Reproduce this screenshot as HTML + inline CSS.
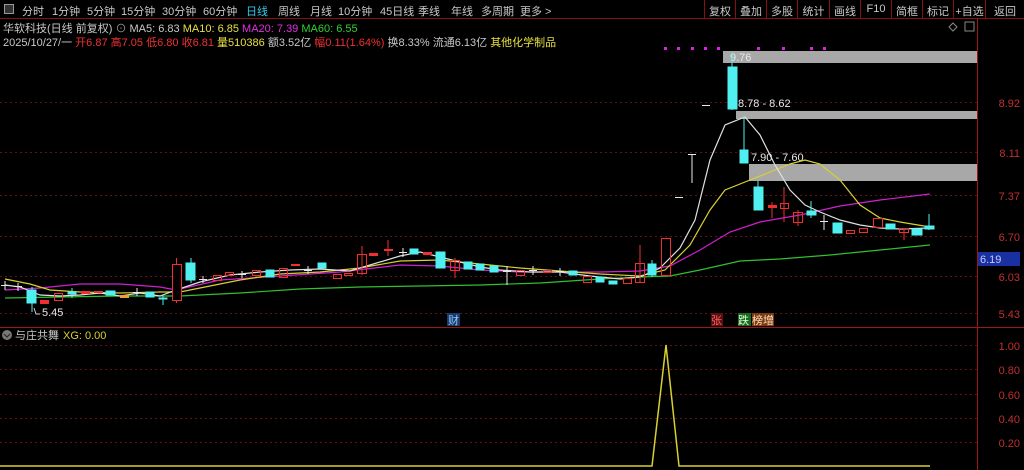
<!DOCTYPE html>
<html><head><meta charset="utf-8"><style>
*{margin:0;padding:0;box-sizing:border-box}
body{width:1024px;height:470px;background:#000;overflow:hidden;position:relative;font-family:"Liberation Sans","Noto Sans CJK SC",sans-serif;font-size:11px;color:#c8c8c8}
.t{position:absolute;white-space:nowrap}
#tb{position:absolute;left:0;top:0;width:1024px;height:19px;border-bottom:1px solid #8a1010}
#tb span{position:absolute;top:3px;font-size:11px;color:#c8c8c8}
.btn{position:absolute;top:0;height:19px;border-left:1px solid #8a1010;color:#c8c8c8;font-size:11px;padding-top:3px;text-align:center}
</style></head><body>
<div id="tb">
<div style="position:absolute;left:4px;top:4px;width:10px;height:10px;border:1px solid #999;background:#333"></div>
<span style="left:22px">分时</span><span style="left:52px">1分钟</span><span style="left:87px">5分钟</span><span style="left:121px">15分钟</span><span style="left:162px">30分钟</span><span style="left:203px">60分钟</span><span style="left:246px;color:#3cc8e8">日线</span><span style="left:278px">周线</span><span style="left:310px">月线</span><span style="left:338px">10分钟</span><span style="left:380px">45日线</span><span style="left:418px">季线</span><span style="left:451px">年线</span><span style="left:481px">多周期</span><span style="left:520px">更多 &gt;</span>
<div class="btn" style="left:704px;width:31px">复权</div><div class="btn" style="left:735px;width:31px">叠加</div><div class="btn" style="left:766px;width:31px">多股</div><div class="btn" style="left:797px;width:32px">统计</div><div class="btn" style="left:829px;width:31px">画线</div><div class="btn" style="left:860px;width:31px">F10</div><div class="btn" style="left:891px;width:31px">简框</div><div class="btn" style="left:922px;width:31px">标记</div><div class="btn" style="left:953px;width:32px">+自选</div><div class="btn" style="left:985px;width:39px">返回</div>
</div>
<div class="t" style="left:3px;top:20px">华软科技(日线 前复权) <span style="color:#999">⊙</span> MA5: 6.83 <span style="color:#e8e040">MA10: 6.85</span> <span style="color:#e030e0">MA20: 7.39</span> <span style="color:#30d030">MA60: 6.55</span></div>
<div class="t" style="left:3px;top:34px">2025/10/27/一 <span style="color:#f03030">开6.87 高7.05 低6.80 收6.81</span> <span style="color:#e8e040">量510386</span> 额3.52亿 <span style="color:#f03030">幅0.11(1.64%)</span> 换8.33% 流通6.13亿 <span style="color:#e8e040">其他化学制品</span></div>
<svg width="1024" height="470" style="position:absolute;left:0;top:0" xmlns="http://www.w3.org/2000/svg">
<g stroke="#6a1010" stroke-dasharray="2,3" stroke-width="1">
<line x1="0" y1="102.5" x2="977" y2="102.5"/><line x1="0" y1="152.5" x2="977" y2="152.5"/><line x1="0" y1="195.5" x2="977" y2="195.5"/><line x1="0" y1="236.5" x2="977" y2="236.5"/><line x1="0" y1="276.5" x2="977" y2="276.5"/><line x1="0" y1="313.5" x2="977" y2="313.5"/>
<line x1="0" y1="345.5" x2="977" y2="345.5"/><line x1="0" y1="369.5" x2="977" y2="369.5"/><line x1="0" y1="394.5" x2="977" y2="394.5"/><line x1="0" y1="418.5" x2="977" y2="418.5"/><line x1="0" y1="442.5" x2="977" y2="442.5"/>
</g>
<line x1="977.5" y1="19" x2="977.5" y2="470" stroke="#a01515"/>
<line x1="0" y1="327.5" x2="1024" y2="327.5" stroke="#a01515"/>
<g fill="#c03030" font-size="11" font-family="Liberation Sans">
<text x="1020" y="107" text-anchor="end">8.92</text><text x="1020" y="157" text-anchor="end">8.11</text><text x="1020" y="200" text-anchor="end">7.37</text><text x="1020" y="241" text-anchor="end">6.70</text><text x="1020" y="281" text-anchor="end">6.03</text><text x="1020" y="318" text-anchor="end">5.43</text>
<text x="1020" y="350" text-anchor="end">1.00</text><text x="1020" y="374" text-anchor="end">0.80</text><text x="1020" y="399" text-anchor="end">0.60</text><text x="1020" y="423" text-anchor="end">0.40</text><text x="1020" y="447" text-anchor="end">0.20</text>
</g>
<rect x="978" y="252" width="42" height="14" fill="#1830a0"/><text x="980" y="263" fill="#c8c8ff" font-size="11" font-family="Liberation Sans">6.19</text>
<path d="M953 23l4 4-4 4-4-4z" fill="none" stroke="#888"/><rect x="965" y="22" width="9" height="9" fill="none" stroke="#888"/>
<g fill="#a8a8a8"><rect x="723" y="51" width="254" height="12"/><rect x="736" y="111" width="241" height="8"/><rect x="749" y="164" width="228" height="17"/></g>
<g fill="#e8e8e8" font-size="11" font-family="Liberation Sans"><text x="730" y="61">9.76</text><text x="738" y="107">8.78 - 8.62</text><text x="751" y="161">7.90 - 7.60</text><text x="42" y="316">5.45</text></g>
<path d="M34 308l2 6h4" stroke="#ccc" fill="none"/>
<g fill="#e020e0"><rect x="664" y="47" width="3" height="3"/><rect x="677" y="47" width="3" height="3"/><rect x="691" y="47" width="3" height="3"/><rect x="704" y="47" width="3" height="3"/><rect x="717" y="47" width="3" height="3"/><rect x="757" y="47" width="3" height="3"/><rect x="782" y="47" width="3" height="3"/><rect x="810" y="47" width="3" height="3"/><rect x="823" y="47" width="3" height="3"/></g>
<polyline fill="none" stroke="#30c030" stroke-width="1.2" points="5,298 60,297 120,296 180,296 240,293 300,289 360,287 420,286 480,285 540,283 600,279 640,277 670,276 700,270 740,261 780,259 830,255 880,250 930,245"/>
<polyline fill="none" stroke="#d020d0" stroke-width="1.2" points="5,290 40,288 80,284 120,284 160,287 176,290 220,280 280,276 340,272 400,265 440,266 480,270 520,272 560,272 600,272 640,271 670,266 700,250 730,232 760,222 800,215 840,206 880,200 930,194"/>
<polyline fill="none" stroke="#d8d030" stroke-width="1.2" points="5,279 30,284 50,290 80,292 120,293 160,292 180,292 210,286 240,280 280,274 320,272 360,268 400,261 440,260 480,264 520,268 560,271 600,274 640,276 665,270 690,245 710,210 725,190 745,182 770,172 790,164 805,160 820,164 840,180 860,205 880,218 900,222 930,227"/>
<polyline fill="none" stroke="#e0e0e0" stroke-width="1.2" points="5,285 20,287 40,295 60,296 80,295 100,293 120,296 140,293 160,296 176,290 200,282 230,275 260,272 290,270 320,269 350,271 370,265 400,256 420,252 440,257 460,262 480,267 500,270 530,272 560,272 590,276 620,279 640,277 660,268 680,248 695,220 710,160 725,125 745,117 760,135 775,165 790,190 805,205 820,212 840,220 860,225 880,228 900,229 930,228"/>
<g fill="#50f0f0" stroke="#50f0f0">
<line x1="32" y1="287" x2="32" y2="312"/><rect x="27" y="290" width="9" height="13"/>
<rect x="68" y="292" width="8" height="2"/><line x1="72" y1="288" x2="72" y2="298"/>
<rect x="106" y="291" width="9" height="4"/><rect x="146" y="292" width="8" height="5"/>
<line x1="163" y1="296" x2="163" y2="305"/><rect x="159" y="298" width="8" height="1"/>
<line x1="191" y1="258" x2="191" y2="283"/><rect x="186" y="263" width="9" height="17"/>
<rect x="266" y="270" width="8" height="7"/><rect x="318" y="263" width="8" height="5"/>
<rect x="410" y="249" width="8" height="5"/><rect x="436" y="252" width="9" height="16"/>
<rect x="464" y="262" width="8" height="7"/><rect x="476" y="264" width="8" height="6"/><rect x="490" y="266" width="8" height="6"/>
<rect x="569" y="271" width="8" height="4"/><rect x="596" y="277" width="8" height="5"/><rect x="609" y="281" width="8" height="3"/>
<line x1="652" y1="260" x2="652" y2="277"/><rect x="648" y="264" width="8" height="11"/>
<line x1="732" y1="52" x2="732" y2="110"/><rect x="728" y="67" width="9" height="42"/>
<line x1="744" y1="117" x2="744" y2="163"/><rect x="740" y="150" width="8" height="13"/>
<line x1="758" y1="181" x2="758" y2="210"/><rect x="754" y="187" width="9" height="23"/>
<line x1="811" y1="201" x2="811" y2="218"/><rect x="807" y="211" width="9" height="4"/>
<rect x="833" y="223" width="9" height="10"/><rect x="886" y="224" width="9" height="5"/>
<rect x="912" y="229" width="10" height="6"/>
<line x1="929" y1="214" x2="929" y2="230"/><rect x="925" y="226" width="9" height="3"/>
</g>
<g fill="none" stroke="#f03030">
<rect x="40.5" y="300.5" width="8" height="3" fill="#f03030"/><rect x="54.5" y="293.5" width="8" height="7"/>
<rect x="81.5" y="291.5" width="8" height="2" fill="#f03030"/><rect x="94.5" y="291.5" width="8" height="1" fill="#f03030"/><rect x="120.5" y="295.5" width="8" height="2" fill="#f0a030" stroke="#f0a030"/>
<line x1="176.5" y1="258" x2="176.5" y2="303"/><rect x="172.5" y="264.5" width="9" height="36" fill="#000"/>
<rect x="213.5" y="275.5" width="8" height="5"/><rect x="225.5" y="272.5" width="8" height="3"/><rect x="252.5" y="270.5" width="8" height="5"/>
<rect x="279.5" y="268.5" width="8" height="9"/><rect x="291.5" y="264.5" width="8" height="1" fill="#f03030"/>
<rect x="333.5" y="274.5" width="8" height="4"/><rect x="344.5" y="273.5" width="8" height="2"/>
<line x1="362" y1="246" x2="362" y2="275"/><rect x="357.5" y="254.5" width="9" height="19"/>
<rect x="369.5" y="253.5" width="8" height="2" fill="#f03030"/><line x1="388" y1="240" x2="388" y2="256"/><rect x="384.5" y="249.5" width="8" height="1" fill="#f03030"/>
<rect x="423.5" y="252.5" width="8" height="2" fill="#f03030"/>
<line x1="455" y1="258" x2="455" y2="278"/><rect x="450.5" y="260.5" width="9" height="10"/>
<rect x="516.5" y="270.5" width="8" height="5"/><rect x="543.5" y="270.5" width="8" height="2"/>
<rect x="583.5" y="276.5" width="8" height="6"/><rect x="623.5" y="278.5" width="8" height="5"/>
<line x1="640" y1="245" x2="640" y2="283"/><rect x="635.5" y="263.5" width="9" height="19"/>
<rect x="661.5" y="238.5" width="9" height="37"/>
<line x1="772" y1="202" x2="772" y2="218"/><rect x="768.5" y="205.5" width="8" height="2" fill="#f03030"/>
<line x1="784" y1="187" x2="784" y2="222"/><rect x="780.5" y="203.5" width="8" height="5"/>
<line x1="798" y1="210" x2="798" y2="226"/><rect x="793.5" y="212.5" width="9" height="10"/>
<rect x="846.5" y="230.5" width="8" height="3"/><rect x="859.5" y="228.5" width="8" height="4"/>
<rect x="873.5" y="218.5" width="9" height="9"/>
<line x1="904" y1="228" x2="904" y2="240"/><rect x="899.5" y="228.5" width="9" height="4"/>
</g>
<g stroke="#e8e8e8">
<line x1="1" y1="285.5" x2="9" y2="285.5"/><line x1="5" y1="281" x2="5" y2="290"/>
<line x1="14" y1="286.5" x2="22" y2="286.5"/><line x1="18" y1="283" x2="18" y2="291"/>
<line x1="133" y1="292.5" x2="141" y2="292.5"/><line x1="137" y1="288" x2="137" y2="296"/>
<line x1="199" y1="279.5" x2="207" y2="279.5"/><line x1="203" y1="276" x2="203" y2="283"/>
<line x1="238" y1="274.5" x2="246" y2="274.5"/><line x1="242" y1="271" x2="242" y2="278"/>
<line x1="304" y1="270.5" x2="312" y2="270.5"/><line x1="308" y1="266" x2="308" y2="274"/>
<line x1="399" y1="252.5" x2="407" y2="252.5"/><line x1="403" y1="248" x2="403" y2="257"/>
<line x1="503" y1="271.5" x2="511" y2="271.5"/><line x1="507" y1="266" x2="507" y2="285"/>
<line x1="529" y1="270.5" x2="537" y2="270.5"/><line x1="533" y1="266" x2="533" y2="275"/>
<line x1="556" y1="271.5" x2="564" y2="271.5"/><line x1="560" y1="268" x2="560" y2="276"/>
<line x1="675" y1="197.5" x2="683" y2="197.5"/>
<line x1="688" y1="154.5" x2="696" y2="154.5"/><line x1="692" y1="154" x2="692" y2="183"/>
<line x1="702" y1="105.5" x2="710" y2="105.5"/>
<line x1="820" y1="221.5" x2="828" y2="221.5"/><line x1="824" y1="215" x2="824" y2="230"/>
</g>
<rect x="447" y="313" width="13" height="13" fill="#1a3a6a"/><text x="448" y="324" fill="#8ac8ff" font-size="11" font-family="Noto Sans CJK SC">财</text>
<rect x="711" y="313" width="12" height="13" fill="#5a1010"/><text x="711" y="324" fill="#ff6060" font-size="11" font-family="Noto Sans CJK SC">张</text>
<rect x="738" y="313" width="13" height="13" fill="#1a6a1a"/><text x="738" y="324" fill="#e0ffe0" font-size="11" font-family="Noto Sans CJK SC">跌</text>
<rect x="752" y="313" width="22" height="13" fill="#7a3a10"/><text x="752" y="324" fill="#ffe0c0" font-size="11" font-family="Noto Sans CJK SC">榜增</text>
<circle cx="7" cy="335" r="5" fill="#777"/><path d="M4 334l3 3 3-3" stroke="#222" fill="none"/>
<text x="15" y="339" fill="#c8c8c8" font-size="11" font-family="Noto Sans CJK SC">与庄共舞</text><text x="63" y="339" fill="#d8d030" font-size="11" font-family="Liberation Sans">XG: 0.00</text>
<polyline fill="none" stroke="#d8d030" stroke-width="1.5" points="0,466 652,466 666,345 679,466 930,466"/>
</svg>
</body></html>
